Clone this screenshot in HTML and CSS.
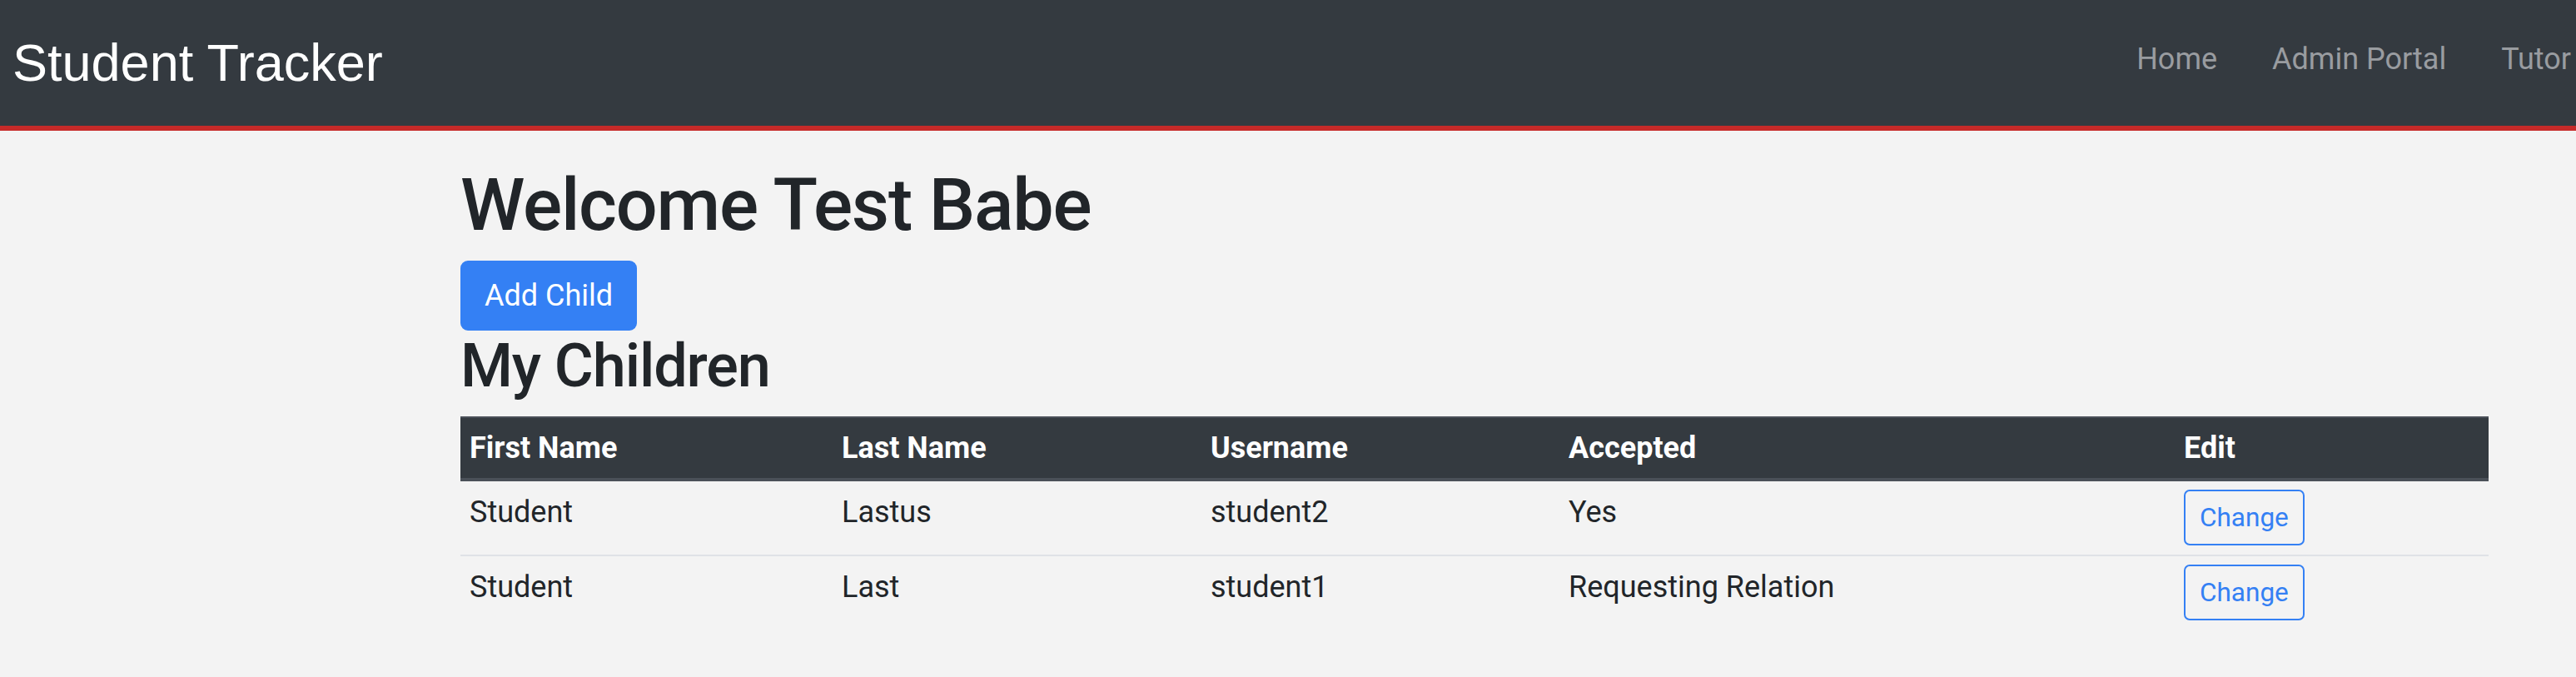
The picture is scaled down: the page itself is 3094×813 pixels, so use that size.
FILE: index.html
```html
<!DOCTYPE html>
<html lang="en">
<head>
<meta charset="utf-8">
<title>Student Tracker</title>
<link rel="stylesheet" href="styles.css">
</head>
<body>
<div class="page">
  <nav class="navbar">
    <a class="brand" href="#">Student Tracker</a>
    <ul class="nav-links">
      <li><a href="#">Home</a></li>
      <li><a href="#">Admin Portal</a></li>
      <li><a href="#">Tutor</a></li>
    </ul>
  </nav>
  <main class="container">
    <h1 class="title">Welcome Test Babe</h1>
    <button class="btn-primary" type="button">Add Child</button>
    <h2 class="subtitle">My Children</h2>
    <table class="children">
      <colgroup>
        <col class="c1"><col class="c2"><col class="c3"><col class="c4"><col class="c5">
      </colgroup>
      <thead>
        <tr><th>First Name</th><th>Last Name</th><th>Username</th><th>Accepted</th><th>Edit</th></tr>
      </thead>
      <tbody>
        <tr><td>Student</td><td>Lastus</td><td>student2</td><td>Yes</td><td><button class="btn-outline" type="button">Change</button></td></tr>
        <tr><td>Student</td><td>Last</td><td>student1</td><td>Requesting Relation</td><td><button class="btn-outline" type="button">Change</button></td></tr>
      </tbody>
    </table>
  </main>
</div>
</body>
</html>
```
FILE: styles.css
```css
html, body {
  margin: 0;
  padding: 0;
  overflow: hidden;
  background: #f3f3f3;
}
body {
  font-family: Roboto, Inter, "Liberation Sans", sans-serif;
  color: #212529;
  font-size: 36px;
  line-height: 1.5;
}
.page {
  width: 3124px;
}
.navbar {
  display: flex;
  align-items: center;
  height: 151px;
  background: #343a40;
  border-bottom: 6px solid #c62a29;
  padding: 0 0 0 15px;
  box-sizing: content-box;
}
.brand {
  font-family: "Liberation Sans", Arial, sans-serif;
  font-size: 63px;
  line-height: 1;
  color: #ffffff;
  text-decoration: none;
}
.nav-links {
  display: flex;
  list-style: none;
  margin: 0 0 10px auto;
  padding: 0;
}
.nav-links a {
  display: block;
  padding: 0 33px;
  color: #999ca0;
  text-decoration: none;
  font-size: 36px;
}
.nav-links li:last-child a {
  padding-right: 36px;
}
.container {
  width: 2436px;
  margin-left: 553px;
  padding-top: 36px;
}
.title {
  font-size: 88px;
  font-weight: 500;
  line-height: 106px;
  letter-spacing: -1.2px;
  margin: 0 0 14px;
}
.btn-primary {
  display: block;
  font-family: inherit;
  font-size: 36px;
  line-height: 54px;
  padding: 13px 27px;
  border: 2px solid #3480f4;
  border-radius: 9px;
  background: #3480f4;
  color: #ffffff;
}
.subtitle {
  font-size: 72px;
  font-weight: 500;
  line-height: 1.2;
  letter-spacing: -1.1px;
  margin: 0 0 17px;
}
.children {
  width: 100%;
  border-collapse: collapse;
  table-layout: fixed;
}
.c1 { width: 447px; }
.c2 { width: 443px; }
.c3 { width: 430px; }
.c4 { width: 739px; }
.c5 { width: 377px; }
.children th, .children td {
  text-align: left;
  vertical-align: top;
  padding: 10px 11px 11px;
}
.children th {
  background: #343a40;
  color: #ffffff;
  font-weight: 700;
  border-top: 2px solid #4a5058;
  border-bottom: 4px solid #4a5058;
  padding-top: 9px;
  padding-bottom: 9px;
}
.children tbody tr + tr td {
  border-top: 2px solid #dfe2e6;
}
.btn-outline {
  font-family: inherit;
  font-size: 31.5px;
  line-height: 47px;
  padding: 8px 17px;
  border: 2px solid #3480f4;
  border-radius: 7px;
  background: transparent;
  color: #3480f4;
}
```
